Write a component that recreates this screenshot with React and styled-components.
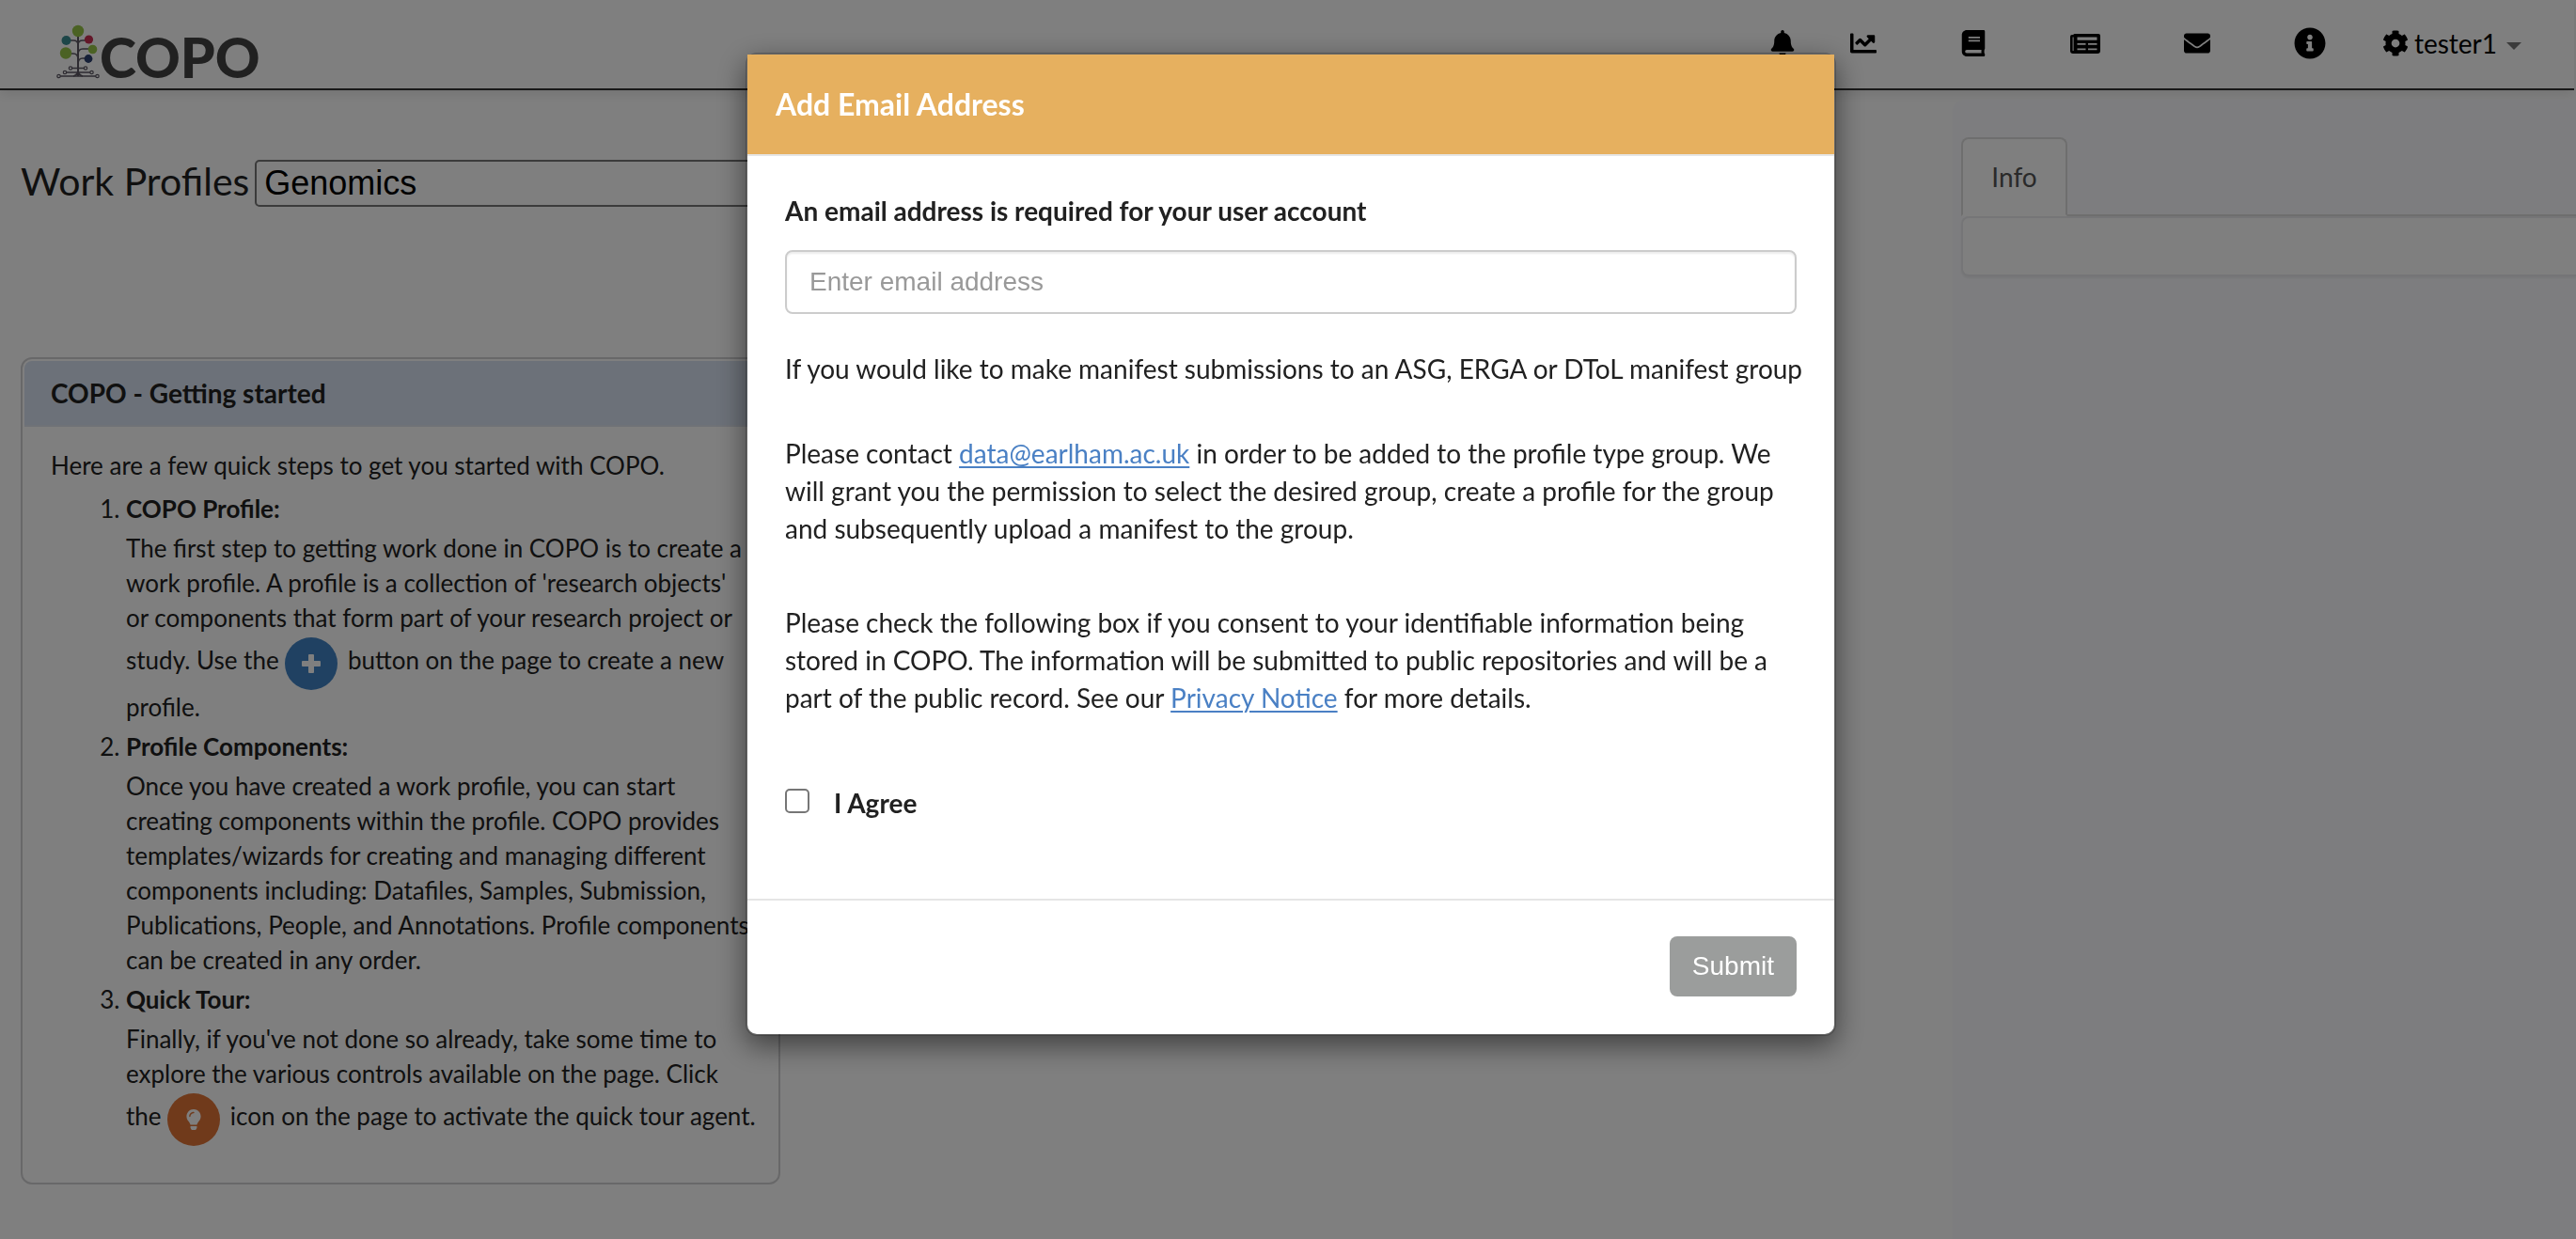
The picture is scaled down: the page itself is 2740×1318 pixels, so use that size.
import React, { useState } from "react";
import styled, { createGlobalStyle } from "styled-components";
import {
  FaBell, FaBook, FaChartLine, FaEnvelope, FaInfoCircle, FaCog, FaLightbulb,
} from "react-icons/fa";

const lato = `Lato, "Open Sans", sans-serif`;
const arial = `"Liberation Sans", Arial, sans-serif`;

const GlobalStyle = createGlobalStyle`
  *, *::before, *::after { box-sizing: border-box; }
  body {
    margin: 0;
    background: #fff;
    color: #212121;
    font: 26px/37px ${lato};
  }
  #root { min-height: 100vh; display: grid; }
`;

const Page = styled.div`
  display: flex;
  flex-direction: column;
  min-width: 0;
`;

const Navbar = styled.header`
  display: flex;
  justify-content: space-between;
  align-items: flex-start;
  height: 96px;
  margin-right: 2px;
  border-bottom: 2px solid #303030;
  box-shadow: 0 4px 12px rgba(0, 0, 0, 0.1);
`;

const Brand = styled.a`
  display: flex;
  align-items: flex-end;
  height: 84px;
  padding-left: 60px;
  color: #434343;
  text-decoration: none;
`;

const BrandText = styled.span`
  font-size: 59px;
  font-weight: 900;
  line-height: 46px;
`;

const Nav = styled.nav`
  display: flex;
  align-items: center;
  gap: 58px;
  height: 92px;
  padding-right: 54px;
`;

const NavGroup = styled.div`
  display: flex;
  align-items: center;
  gap: 89px;
`;

const NavLink = styled.a`
  display: flex;
  color: #000;
  font-size: ${(p) => p.$size}px;
`;

const UserMenu = styled.button`
  display: flex;
  align-items: center;
  gap: 6px;
  padding: 0 2px;
  border: 0;
  background: none;
  color: #000;
  font: 28px/40px ${lato};
`;

const Caret = styled.span`
  margin: 6px 0 0 4px;
  border: 8px solid transparent;
  border-top-color: #777;
  border-bottom: 0;
`;

const Columns = styled.div`
  display: grid;
  grid-template-columns: 2077px 1fr;
  flex: 1;
`;

const Main = styled.main`
  padding: 74px 22px;
`;

const ProfileHeading = styled.div`
  display: flex;
  align-items: flex-start;
  gap: 6px;
  height: 50px;
  label { font-size: 41px; line-height: 46px; }
`;

const ProfileSelect = styled.select`
  appearance: none;
  width: 800px;
  height: 50px;
  padding: 0 8px;
  border: 2px solid #767676;
  border-radius: 5px;
  background: #fff;
  color: #000;
  font: 36px/44px ${arial};
`;

const Card = styled.section`
  width: 808px;
  margin-top: 160px;
  padding: 2px;
  border: 2px solid #d0d0d2;
  border-radius: 12px;
`;

const CardTitle = styled.h2`
  margin: 0;
  padding: 17px 28px;
  border-bottom: 2px solid #dfe4ee;
  border-radius: 8px 8px 0 0;
  background: #d9e3f2;
  font-size: 28px;
  line-height: 34px;
`;

const CardBody = styled.div`
  padding: 23px 12px 32px 28px;
`;

const Intro = styled.p`
  margin: 0 0 9px;
`;

const Steps = styled.ol`
  margin: 0;
  padding-left: 80px;
`;

const StepText = styled.div`
  margin: 5px 0;
`;

const RoundButton = styled.button`
  display: inline-flex;
  align-items: center;
  justify-content: center;
  width: 56px;
  height: 56px;
  margin: 2px 4px 0 0;
  padding: 0;
  border: 0;
  border-radius: 50%;
  background: ${(p) => p.$color};
  color: #fff;
  font-size: 22px;
  vertical-align: middle;
`;

const Side = styled.aside`
  margin-top: 10px;
  padding: 40px 0 0 9px;
  border-radius: 12px 0 0 0;
  background: #fafbfe;
`;

const Tabs = styled.div`
  display: flex;
  border-bottom: 2px solid #ddd;
`;

const Tab = styled.button`
  width: 113px;
  height: 84px;
  margin-bottom: -2px;
  border: 2px solid #ddd;
  border-bottom-color: #fff;
  border-radius: 8px 8px 0 0;
  background: #fff;
  color: #555;
  font: 28px/40px ${lato};
`;

const TabPanel = styled.div`
  height: 64px;
  border: 2px solid #ebebee;
  border-right: 0;
  border-radius: 8px 0 0 8px;
  background: #fff;
  box-shadow: 0 2px 2px rgba(0, 0, 0, 0.05);
`;

const Backdrop = styled.div`
  position: fixed;
  inset: 0;
  display: flex;
  justify-content: center;
  align-items: flex-start;
  padding: 56px 0 0 6px;
  background: rgba(0, 0, 0, 0.5);
`;

const Dialog = styled.div`
  width: 1160px;
  border: 2px solid rgba(0, 0, 0, 0.2);
  border-radius: 12px;
  background: #fff;
  background-clip: padding-box;
  box-shadow: 0 10px 30px rgba(0, 0, 0, 0.5);
  font-size: 28px;
  line-height: 40px;
`;

const DialogHeader = styled.div`
  padding: 30px;
  border-bottom: 2px solid #e5e5e5;
  background: #e6b05f;
  color: #fff;
  h1 { margin: 0; font-size: 32px; line-height: 46px; }
`;

const DialogBody = styled.div`
  padding: 38px 40px 40px;
`;

const FieldLabel = styled.label`
  display: block;
  font-weight: 700;
`;

const EmailInput = styled.input`
  display: block;
  width: 100%;
  height: 68px;
  margin: 22px 0 38px;
  padding: 0 24px;
  border: 2px solid #ccc;
  border-radius: 8px;
  box-shadow: inset 0 2px 2px rgba(0, 0, 0, 0.075);
  font: 28px/40px ${arial};
  &::placeholder { color: #999; opacity: 1; }
`;

const Paragraph = styled.p`
  margin: 0 0 ${(p) => p.$after}px;
  white-space: ${(p) => (p.$oneLine ? "nowrap" : "normal")};
  a { color: #4a80c4; text-underline-offset: 3px; text-decoration-thickness: 2px; }
`;

const Agree = styled.label`
  display: flex;
  align-items: flex-start;
  gap: 26px;
  padding-bottom: 42px;
  font-weight: 700;
`;

const Checkbox = styled.input`
  appearance: none;
  width: 26px;
  height: 26px;
  margin: 5px 0 0;
  border: 2px solid #767676;
  border-radius: 5px;
  background: #fff;
  &:checked { background: #337ab7; }
`;

const DialogFooter = styled.div`
  display: flex;
  justify-content: flex-end;
  padding: 38px 40px 40px;
  border-top: 2px solid #e5e5e5;
`;

const SubmitButton = styled.button`
  height: 64px;
  padding: 0 24px;
  border: 0;
  border-radius: 8px;
  background: #9b9d9c;
  color: #fff;
  font: 28px/40px ${arial};
`;

const TreeLogo = () => (
  <svg width="46" height="58" viewBox="0 0 46 58" fill="none" aria-hidden="true">
    <g stroke="#5b5662" strokeWidth="1.6">
      <path d="M23 12v43" strokeWidth="2" />
      <path d="M14 17h4q5 0 5 5M32 17h-4q-5 0-5 5M14 31h4q5 0 5 6M36 26h-8q-5 0-5 6M32 36h-4q-5 0-5 6" />
      <path d="M16 46.500h14M10 51h26M4 55h38" />
      <path d="M23 50q-1 4-5 5M23 50q1 4 5 5" />
    </g>
    <g fill="#fff" stroke="#5b5662" strokeWidth="1.200">
      <circle cx="15" cy="46.500" r="1.700" /><circle cx="31" cy="46.500" r="1.700" />
      <circle cx="9" cy="51" r="1.700" /><circle cx="37.500" cy="51" r="1.700" />
      <circle cx="2.500" cy="55" r="1.700" /><circle cx="43.500" cy="55" r="1.700" />
    </g>
    <g fill="#97c549">
      <circle cx="23" cy="7" r="6.200" /><circle cx="10" cy="30.500" r="6.200" /><circle cx="38.500" cy="26.500" r="4.800" />
    </g>
    <circle cx="10.500" cy="17" r="5" fill="#3b8c90" />
    <circle cx="34.500" cy="16" r="4.600" fill="#c92e52" />
    <circle cx="34" cy="36.500" r="4.400" fill="#2c4170" />
  </svg>
);

const NewsIcon = () => (
  <svg width="32" height="21" viewBox="0 0 32 21" fill="currentColor" aria-hidden="true">
    <path
      fillRule="evenodd"
      d="M5 0h25a2 2 0 0 1 2 2v16a3 3 0 0 1-3 3H3a3 3 0 0 1-3-3V3a2 2 0 0 1 2-2h1.200q.6-1 1.800-1zM2.600 3.500v14.500h1V3.500zM7.500 3.600v3.200h21V3.600zM7.500 10v1.700h9V10zM19 10v1.700h9.500V10zM7.500 15.500v1.700h9v-1.700zM19 15.500v1.700h9.500v-1.700z"
    />
  </svg>
);

const PlusIcon = () => (
  <svg width="20" height="20" viewBox="0 0 20 20" fill="currentColor" aria-hidden="true">
    <rect x="7" y="0" width="6" height="20" rx="1" />
    <rect x="0" y="7" width="20" height="6" rx="1" />
  </svg>
);

export default function App() {
  const [agreed, setAgreed] = useState(false);
  return (
    <>
      <GlobalStyle />
      <Page>
        <Navbar>
          <Brand href="#home"><TreeLogo /><BrandText>COPO</BrandText></Brand>
          <Nav aria-label="Main">
            <NavLink href="#notifications" aria-label="Notifications" $size={28}><FaBell /></NavLink>
            <NavGroup>
              <NavLink href="#stats" aria-label="Statistics" $size={28}><FaChartLine /></NavLink>
              <NavLink href="#docs" aria-label="Documentation" $size={28}><FaBook /></NavLink>
              <NavLink href="#news" aria-label="News" $size={28}><NewsIcon /></NavLink>
              <NavLink href="#contact" aria-label="Contact" $size={28}><FaEnvelope /></NavLink>
              <NavLink href="#about" aria-label="About" $size={34}><FaInfoCircle /></NavLink>
            </NavGroup>
            <UserMenu type="button"><FaCog />tester1<Caret /></UserMenu>
          </Nav>
        </Navbar>
        <Columns>
          <Main>
            <ProfileHeading>
              <label htmlFor="profile-type">Work Profiles</label>
              <ProfileSelect id="profile-type"><option>Genomics</option></ProfileSelect>
            </ProfileHeading>
            <Card>
              <CardTitle>COPO - Getting started</CardTitle>
              <CardBody>
                <Intro>Here are a few quick steps to get you started with COPO.</Intro>
                <Steps>
                  <li>
                    <strong>COPO Profile:</strong>
                    <StepText>
                      The first step to getting work done in COPO is to create a work profile. A profile is a
                      collection of 'research objects' or&nbsp;components that form part of your research project or
                      study. Use the <RoundButton type="button" aria-label="Create profile" $color="#4183c4"><PlusIcon /></RoundButton> button
                      on the page to create a new profile.
                    </StepText>
                  </li>
                  <li>
                    <strong>Profile Components:</strong>
                    <StepText>
                      Once you have created a work profile, you can start creating components within the profile.
                      COPO provides templates/wizards for creating and managing different components including:
                      Datafiles, Samples, Submission, Publications, People, and Annotations. Profile components
                      can be created in any order.
                    </StepText>
                  </li>
                  <li>
                    <strong>Quick Tour:</strong>
                    <StepText>
                      Finally, if you've not done so already, take some time to explore the various controls
                      available on the page.
                      Click <br />the <RoundButton type="button" aria-label="Quick tour" $color="#e07436"><FaLightbulb /></RoundButton> icon
                      on the page to activate the quick tour agent.
                    </StepText>
                  </li>
                </Steps>
              </CardBody>
            </Card>
          </Main>
          <Side>
            <Tabs role="tablist"><Tab type="button" role="tab" aria-selected="true">Info</Tab></Tabs>
            <TabPanel role="tabpanel" />
          </Side>
        </Columns>
      </Page>
      <Backdrop>
        <Dialog role="dialog" aria-modal="true" aria-labelledby="dialog-title">
          <DialogHeader><h1 id="dialog-title">Add Email Address</h1></DialogHeader>
          <DialogBody>
            <FieldLabel htmlFor="email">An email address is required for your user account</FieldLabel>
            <EmailInput id="email" type="email" placeholder="Enter email address" />
            <Paragraph $after={50} $oneLine>
              If you would like to make manifest submissions to an ASG, ERGA or DToL manifest group
            </Paragraph>
            <Paragraph $after={60}>
              Please contact <a href="mailto:data@earlham.ac.uk">data@earlham.ac.uk</a> in order to be added to
              the profile type group. We will grant you the permission to select the desired group, create a
              profile for the group and subsequently upload a manifest to the group.
            </Paragraph>
            <Paragraph $after={72}>
              Please check the following box if you consent to your identifiable information being stored in
              COPO. The information will be submitted to public repositories and will be a part of the public
              record. See our <a href="#privacy">Privacy Notice</a> for more details.
            </Paragraph>
            <Agree>
              <Checkbox type="checkbox" checked={agreed} onChange={(e) => setAgreed(e.target.checked)} />
              I Agree
            </Agree>
          </DialogBody>
          <DialogFooter><SubmitButton type="submit">Submit</SubmitButton></DialogFooter>
        </Dialog>
      </Backdrop>
    </>
  );
}
